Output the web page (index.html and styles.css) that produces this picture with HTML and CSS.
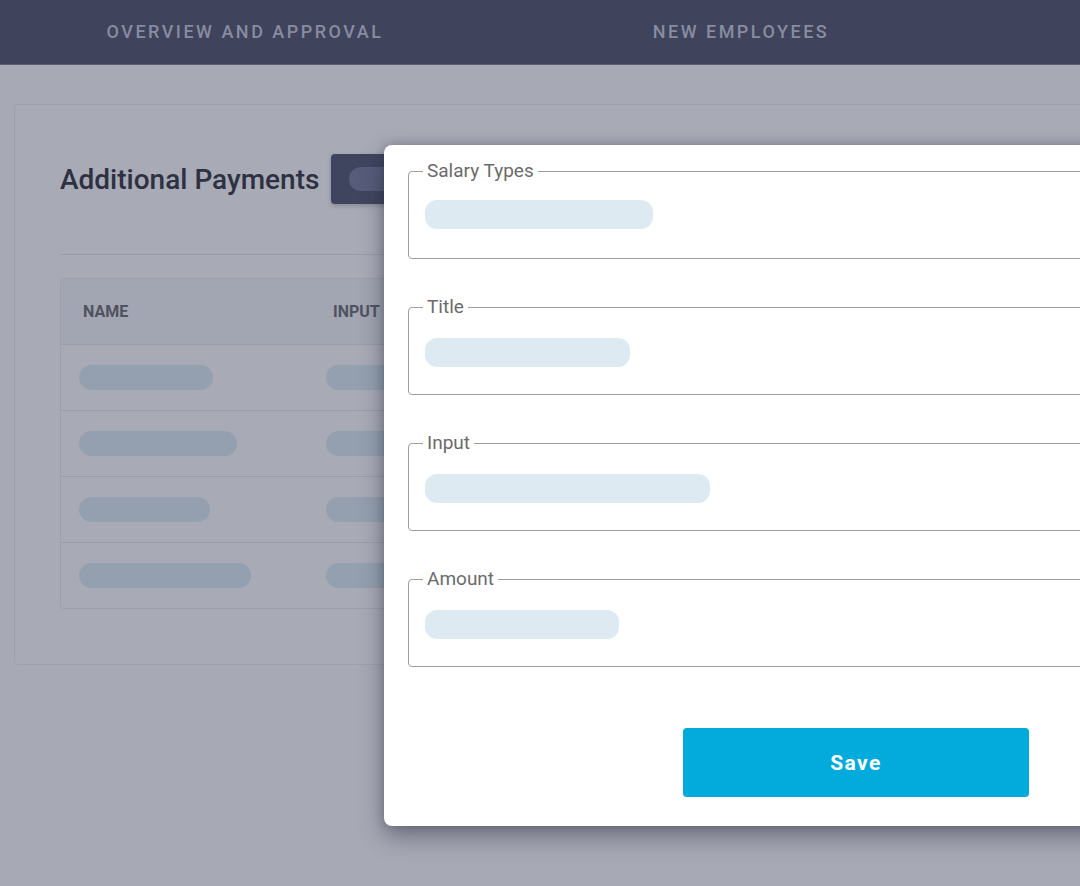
FILE: index.html
```html
<!DOCTYPE html>
<html lang="en">
<head>
<meta charset="utf-8">
<title>Additional Payments</title>
<link rel="stylesheet" href="styles.css">
</head>
<body>
<header class="nav">
  <div class="tab">OVERVIEW AND APPROVAL</div>
  <div class="tab">NEW EMPLOYEES</div>
</header>
<main class="page">
  <section class="card">
    <div class="card-head">
      <h1 class="title">Additional Payments</h1>
      <button class="add-btn"><span class="add-pill"></span></button>
    </div>
    <hr class="divider">
    <div class="table">
      <div class="row head">
        <div class="cell">NAME</div>
        <div class="cell">INPUT</div>
      </div>
      <div class="row">
        <div class="cell"><span class="bone" style="width:134px"></span></div>
        <div class="cell"><span class="bone" style="width:120px"></span></div>
      </div>
      <div class="row">
        <div class="cell"><span class="bone" style="width:158px"></span></div>
        <div class="cell"><span class="bone" style="width:120px"></span></div>
      </div>
      <div class="row">
        <div class="cell"><span class="bone" style="width:131px"></span></div>
        <div class="cell"><span class="bone" style="width:120px"></span></div>
      </div>
      <div class="row">
        <div class="cell"><span class="bone" style="width:172px"></span></div>
        <div class="cell"><span class="bone" style="width:120px"></span></div>
      </div>
    </div>
  </section>
</main>
<div class="modal">
  <fieldset class="field first">
    <legend>Salary Types</legend>
    <span class="skel" style="width:228px"></span>
  </fieldset>
  <fieldset class="field">
    <legend>Title</legend>
    <span class="skel" style="width:205px"></span>
  </fieldset>
  <fieldset class="field">
    <legend>Input</legend>
    <span class="skel" style="width:285px"></span>
  </fieldset>
  <fieldset class="field">
    <legend>Amount</legend>
    <span class="skel" style="width:194px"></span>
  </fieldset>
  <div class="actions">
    <button class="save">Save</button>
  </div>
</div>
</body>
</html>
```

FILE: styles.css
```css
* { box-sizing: border-box; }
html, body { margin: 0; padding: 0; }
body {
  width: 1080px;
  height: 886px;
  overflow: hidden;
  background: #a7a9b5;
  font-family: Roboto, "Liberation Sans", Arial, sans-serif;
  position: relative;
}
.nav {
  height: 65px;
  background: #3f435b;
  display: flex;
  border-bottom: 1px solid #5a5e74;
}
.tab {
  flex: 0 0 490px;
  text-align: center;
  line-height: 64px;
  font-size: 18px;
  font-weight: 500;
  letter-spacing: 2.5px;
  color: #888ca1;
}
.tab + .tab {
  flex-basis: 502px;
}
.page {
  padding: 39px 0 0 14px;
}
.card {
  width: 1120px;
  height: 561px;
  border: 1px solid #9ea1ad;
  border-radius: 4px;
  background: #a8aab6;
  padding: 49px 0 0 45px;
}
.card-head {
  display: flex;
  align-items: center;
  gap: 12px;
  height: 50px;
}
.title {
  margin: 0;
  font-size: 28px;
  font-weight: 500;
  color: #2e3142;
}
.add-btn {
  width: 130px;
  height: 50px;
  border: 0;
  border-radius: 4px;
  background: #40455f;
  padding: 0 0 0 18px;
  display: flex;
  align-items: center;
  box-shadow: 0 2px 4px rgba(40, 44, 60, 0.25);
}
.add-pill {
  display: block;
  width: 80px;
  height: 24px;
  border-radius: 12px;
  background: #575c7b;
}
.divider {
  margin: 50px 0 0 0;
  border: 0;
  border-top: 1px solid #9a9da9;
}
.table {
  margin-top: 23px;
  border: 1px solid #9da0ac;
  border-radius: 4px;
  overflow: hidden;
}
.row {
  display: grid;
  grid-template-columns: 247px 247px 1fr;
  height: 66px;
  align-items: center;
  border-top: 1px solid #9a9daa;
}
.row.head {
  border-top: 0;
  height: 65px;
  background: #a2a5b2;
}
.cell {
  padding-left: 18px;
  display: flex;
  align-items: center;
}
.row.head .cell {
  padding-left: 22px;
  font-size: 16px;
  font-weight: 700;
  color: #50535f;
}
.row.head .cell + .cell {
  padding-left: 25px;
}
.bone {
  display: block;
  height: 25px;
  border-radius: 12.5px;
  background: #94a0b0;
}
.modal {
  position: absolute;
  left: 384px;
  top: 145px;
  width: 944px;
  height: 681px;
  background: #ffffff;
  border-radius: 8px;
  padding: 15px 24px 29px 24px;
  box-shadow: 0 10px 24px rgba(35, 38, 56, 0.45), 0 0 10px rgba(35, 38, 56, 0.25);
  display: flex;
  flex-direction: column;
  gap: 37px;
}
.field {
  margin: 0;
  min-width: 0;
  border: 1px solid #9e9e9e;
  border-radius: 4px;
  padding: 20px 16px 27px 16px;
}
.field.first {
  padding-top: 18px;
  padding-bottom: 29px;
}
.field legend {
  margin-left: -2px;
  padding: 0 4px;
  font-size: 19px;
  line-height: 22px;
  color: #6b6b6b;
}
.skel {
  display: block;
  height: 29px;
  border-radius: 12px;
  background: #ddeaf1;
}
.actions {
  display: flex;
  justify-content: center;
  margin-top: 24px;
}
.save {
  width: 346px;
  height: 69px;
  border: 0;
  border-radius: 4px;
  background: #02abdc;
  color: #ffffff;
  font-family: Roboto, "Liberation Sans", Arial, sans-serif;
  font-size: 21px;
  font-weight: 700;
  letter-spacing: 1.4px;
}
```
